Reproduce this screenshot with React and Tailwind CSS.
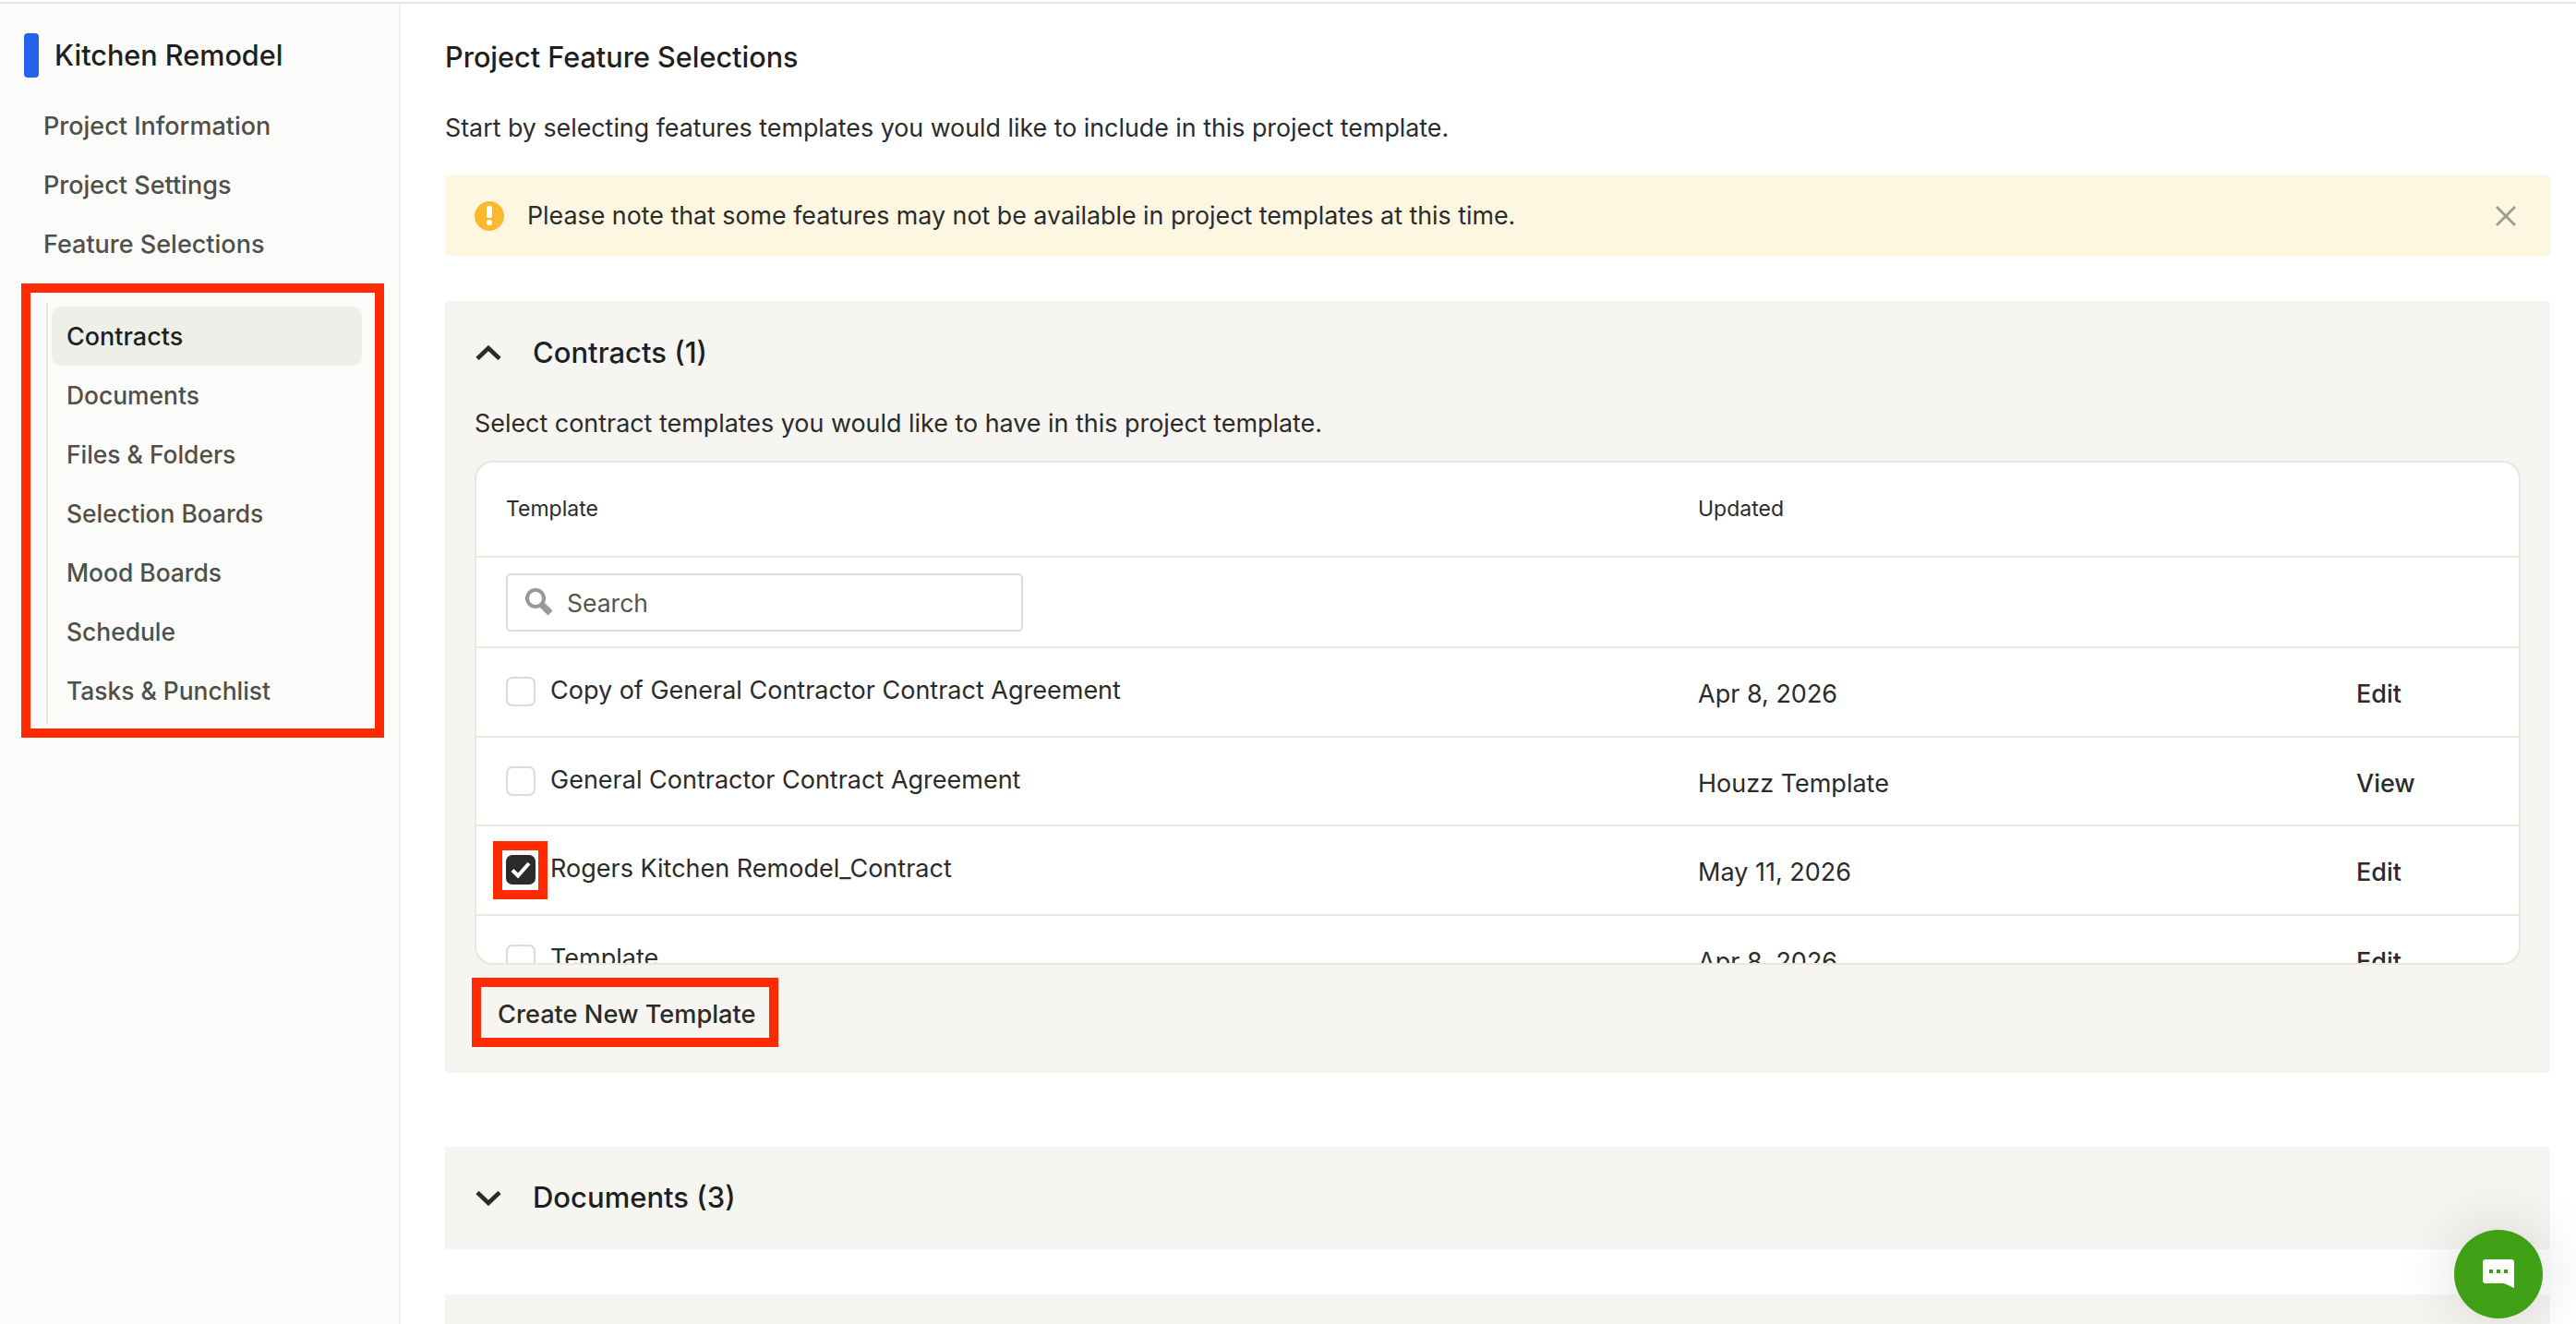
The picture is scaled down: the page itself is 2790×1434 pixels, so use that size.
import React from 'react';

const FONT = "font-['Inter',sans-serif]";

const topLinks = ['Project Information', 'Project Settings', 'Feature Selections'];
const subLinks = ['Documents', 'Files & Folders', 'Selection Boards', 'Mood Boards', 'Schedule', 'Tasks & Punchlist'];

const rows = [
  { name: 'Copy of General Contractor Contract Agreement', updated: 'Apr 8, 2026', action: 'Edit' },
  { name: 'General Contractor Contract Agreement', updated: 'Houzz Template', action: 'View' },
  { name: 'Rogers Kitchen Remodel_Contract', updated: 'May 11, 2026', action: 'Edit', checked: true },
  { name: 'Template', updated: 'Apr 8, 2026', action: 'Edit' },
];

const Chevron = ({ up }) => (
  <svg width="28" height="16" viewBox="0 0 28 16" fill="none" className="shrink-0 ml-[1px]">
    <path
      d={up ? 'M2 14.5 L14 3 L26 14.5' : 'M2 1.5 L14 13 L26 1.5'}
      stroke="#2b2b2b"
      strokeWidth="4.6"
    />
  </svg>
);

const Row = ({ row }) => (
  <div className="h-[96.5px] shrink-0 border-b-2 border-[#e8e8e1] flex items-start text-[27px] text-[#2b2b2b]">
    <div className="w-[1323px] pl-[32px] pt-[28px] flex items-center gap-[16px]">
      <div className="relative w-[32px] h-[32px] shrink-0">
        {row.checked ? (
          <>
            <div className="w-full h-full rounded-[7px] bg-[#2b2b2b] flex items-center justify-center">
              <svg width="22" height="20" viewBox="0 0 22 20" fill="none">
                <path d="M2 10.5 L8 16.5 L20 3" stroke="white" strokeWidth="4" />
              </svg>
            </div>
            <div className="absolute left-[-14px] top-[-15px] w-[59px] h-[63px] border-[10px] border-[#ff2a00]" />
          </>
        ) : (
          <div className="w-full h-full rounded-[7px] border-2 border-[#dcdcd4] bg-white" />
        )}
      </div>
      <span className="whitespace-nowrap -mt-[2px]">{row.name}</span>
    </div>
    <div className="w-[713px] pt-[30px]">{row.updated}</div>
    <div className="pt-[30px] font-medium">{row.action}</div>
  </div>
);

export default function App() {
  return (
    <div className={`${FONT} relative w-[2790px] h-[1434px] overflow-hidden bg-white flex flex-col`}>
      <div className="h-[4px] shrink-0 border-b-2 border-[#e6e6e6]" />
      <div className="flex flex-1 min-h-0">
        {/* sidebar */}
        <aside className="w-[434px] shrink-0 bg-[#fbfbf9] border-r-2 border-[#f0f0ee] pt-[32px]">
          <div className="flex items-center gap-[17px] pl-[26px] h-[48px]">
            <div className="w-[16px] h-[48px] rounded-[4px] bg-[#2563eb]" />
            <span className="text-[30.6px] font-medium text-[#1f1f1f]">Kitchen Remodel</span>
          </div>
          <nav className="mt-[21px]">
            {topLinks.map((link) => (
              <div key={link} className="h-[64px] pl-[47px] flex items-center text-[27px] font-medium text-[#4f4f4b]">
                {link}
              </div>
            ))}
          </nav>
          <div className="relative ml-[50px] mt-[31px] w-[342px] border-l-2 border-[#e6e6df] py-[4px] pl-[4px]">
            <div className="h-[64px] rounded-[10px] bg-[#efefe9] pl-[16px] pt-[2px] flex items-center text-[27px] font-medium text-[#1f1f1f]">
              Contracts
            </div>
            {subLinks.map((link) => (
              <div key={link} className="h-[64px] pl-[16px] pt-[2px] flex items-center text-[26.4px] font-medium text-[#4f4f4b]">
                {link}
              </div>
            ))}
            <div className="absolute left-[-29px] top-[-21px] w-[393px] h-[492px] border-[10px] border-[#ff2a00]" />
          </div>
        </aside>

        {/* main */}
        <main className="flex-1 min-w-0 pl-[48px] pr-[28px] pt-[38px]">
          <h1 className="h-[40px] flex items-center text-[30.6px] font-medium text-[#1f1f1f]">Project Feature Selections</h1>
          <p className="mt-[36px] h-[40px] flex items-center text-[26.8px] text-[#2b2b2b]">
            Start by selecting features templates you would like to include in this project template.
          </p>

          <div className="mt-[32px] h-[87px] bg-[#fdf6e0] rounded-[2px] flex items-center pl-[32px] pr-[36px]">
            <div className="w-[32px] h-[32px] rounded-full bg-[#fdb92c] flex flex-col items-center justify-center gap-[2px] shrink-0">
              <div className="w-[6px] h-[13px] rounded-[2px] bg-white" />
              <div className="w-[6px] h-[6px] rounded-full bg-white" />
            </div>
            <span className="ml-[25px] flex-1 text-[26.8px] text-[#2b2b2b]">
              Please note that some features may not be available in project templates at this time.
            </span>
            <svg width="24" height="24" viewBox="0 0 24 24" fill="none">
              <path d="M2 2 L22 22 M22 2 L2 22" stroke="#a09c8e" strokeWidth="2.8" />
            </svg>
          </div>

          {/* contracts panel */}
          <section className="mt-[49px] h-[836px] bg-[#f6f5f1] rounded-[2px] px-[32px]">
            <div className="h-[112px] flex items-center gap-[34px]">
              <Chevron up />
              <span className="text-[31px] font-medium text-[#1f1f1f]">Contracts (1)</span>
            </div>
            <p className="h-[40px] flex items-center text-[26.9px] text-[#2b2b2b]">
              Select contract templates you would like to have in this project template.
            </p>
            <div className="mt-[21px] h-[546px] w-[2216px] rounded-[20px] border-2 border-[#e8e8e1] bg-white overflow-hidden flex flex-col">
              <div className="h-[103px] shrink-0 border-b-2 border-[#e8e8e1] flex items-center text-[23px] text-[#2b2b2b]">
                <div className="w-[1323px] pl-[32px]">Template</div>
                <div>Updated</div>
              </div>
              <div className="h-[98px] shrink-0 border-b-2 border-[#e8e8e1] flex items-center pl-[32px]">
                <div className="w-[560px] h-[63px] rounded-[5px] border-2 border-[#dcdcd4] flex items-center pl-[18px] gap-[14px]">
                  <svg width="32" height="32" viewBox="0 0 32 32" fill="none" className="shrink-0">
                    <circle cx="12" cy="12" r="9" stroke="#999" strokeWidth="4" />
                    <path d="M19 19 L28 28" stroke="#999" strokeWidth="7" />
                  </svg>
                  <span className="text-[26.5px] text-[#55554f] pt-[3px]">Search</span>
                </div>
              </div>
              {rows.map((row) => (
                <Row key={row.name} row={row} />
              ))}
            </div>
            <div className="relative inline-flex items-center h-[55px] ml-[7px] mt-[24px] pl-[18px] pr-[15px] pt-[5px] text-[27.2px] font-medium text-[#2b2b2b]">
              Create New Template
              <div className="absolute inset-[-10px] border-[10px] border-[#ff2a00]" />
            </div>
          </section>

          <section className="mt-[80px] h-[111px] bg-[#f6f5f1] px-[32px] flex items-center gap-[34px]">
            <Chevron />
            <span className="text-[31px] font-medium text-[#1f1f1f]">Documents (3)</span>
          </section>
          <section className="mt-[49px] h-[100px] bg-[#f6f5f1]" />
        </main>
      </div>

      {/* chat button */}
      <div className="absolute right-[36px] bottom-[6px] w-[96px] h-[96px] rounded-full bg-[#3f9f15] shadow-[0_0_70px_rgba(0,0,0,0.16)] flex items-center justify-center">
        <svg width="36" height="34" viewBox="0 0 36 34" fill="none">
          <path d="M4 1 H32 Q35 1 35 4 V32 L24 27 H4 Q1 27 1 24 V4 Q1 1 4 1 Z" fill="white" />
          <rect x="8" y="12" width="4" height="4" fill="#3f9f15" />
          <rect x="16" y="12" width="4" height="4" fill="#3f9f15" />
          <rect x="24" y="12" width="4" height="4" fill="#3f9f15" />
        </svg>
      </div>
    </div>
  );
}
